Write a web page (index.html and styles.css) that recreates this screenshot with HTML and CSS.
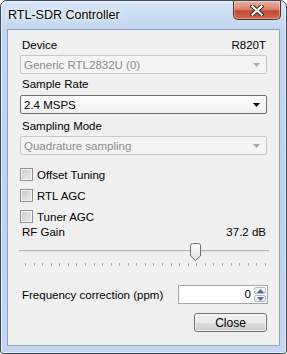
FILE: index.html
```html
<!DOCTYPE html>
<html>
  <head>
    <title>RTL-SDR Controller</title>
    <link rel="stylesheet" href="styles.css">
  </head>
  <body>
    <div id="window">
      <div id="titlebar">
        <div id="titlebar-title">RTL-SDR Controller</div>
        <div id="close-x">
          <svg width="14" height="11" viewBox="0 0 14 11">
            <path d="M2.5 1.5 L11.5 9.5 M11.5 1.5 L2.5 9.5" stroke="#3a2a28" stroke-width="4.2" stroke-linecap="square"/>
            <path d="M2.5 1.5 L11.5 9.5 M11.5 1.5 L2.5 9.5" stroke="#ffffff" stroke-width="2.2" stroke-linecap="square"/>
          </svg>
        </div>
      </div>
      <div id="client">
        <div class="label-row label-device">
          <span>Device</span>
          <span>R820T</span>
        </div>
        <div class="combo disabled combo-device">
          <span>Generic RTL2832U (0)</span>
          <svg class="arrow" width="7" height="4" viewBox="0 0 7 4"><path d="M0 0 H7 L3.5 4 Z"/></svg>
        </div>
        <div class="label-row label-rate">
          <span>Sample Rate</span>
        </div>
        <div class="combo combo-rate">
          <span>2.4 MSPS</span>
          <svg class="arrow" width="7" height="4" viewBox="0 0 7 4"><path d="M0 0 H7 L3.5 4 Z"/></svg>
        </div>
        <div class="label-row label-mode">
          <span>Sampling Mode</span>
        </div>
        <div class="combo disabled combo-mode">
          <span>Quadrature sampling</span>
          <svg class="arrow" width="7" height="4" viewBox="0 0 7 4"><path d="M0 0 H7 L3.5 4 Z"/></svg>
        </div>
        <div class="checks">
          <div class="check-row"><span class="checkbox"></span><span>Offset Tuning</span></div>
          <div class="check-row"><span class="checkbox"></span><span>RTL AGC</span></div>
          <div class="check-row"><span class="checkbox"></span><span>Tuner AGC</span></div>
        </div>
        <div class="label-row label-gain">
          <span>RF Gain</span>
          <span>37.2 dB</span>
        </div>
        <div class="slider">
          <div class="slider-track"></div>
          <div class="slider-ticks">
            <i></i><i></i><i></i><i></i><i></i><i></i><i></i><i></i><i></i><i></i>
            <i></i><i></i><i></i><i></i><i></i><i></i><i></i><i></i><i></i><i></i>
            <i></i><i></i><i></i><i></i><i></i><i></i><i></i><i></i><i></i>
          </div>
          <svg class="slider-thumb" style="left: 171px" width="11" height="18" viewBox="0 0 11 18">
            <defs>
              <linearGradient id="thumb-fill" x1="0" y1="0" x2="0" y2="1">
                <stop offset="0" stop-color="#ffffff"/>
                <stop offset="1" stop-color="#dcdcdc"/>
              </linearGradient>
            </defs>
            <path d="M0.5 2.5 Q0.5 0.5 2.5 0.5 H8.5 Q10.5 0.5 10.5 2.5 V13 L5.5 17.5 L0.5 13 Z" fill="url(#thumb-fill)" stroke="#707070"/>
          </svg>
        </div>
        <div class="freq-row">
          <span>Frequency correction (ppm)</span>
          <div class="spin-box">
            <span class="spin-value">0</span>
            <div class="spin-buttons">
              <div class="spin-btn">
                <svg width="7" height="4" viewBox="0 0 7 4"><path d="M0 4 H7 L3.5 0 Z"/></svg>
              </div>
              <div class="spin-btn">
                <svg width="7" height="4" viewBox="0 0 7 4"><path d="M0 0 H7 L3.5 4 Z"/></svg>
              </div>
            </div>
          </div>
        </div>
        <div class="button-row">
          <button id="close-button">Close</button>
        </div>
      </div>
    </div>
  </body>
</html>
```

FILE: styles.css
```css
* {
  margin: 0;
  padding: 0;
  box-sizing: border-box;
}

body {
  font-family: "Liberation Sans", Arial, sans-serif;
  font-size: 11.5px;
  color: #000;
  background-color: #fff;
}

#window {
  width: 287px;
  height: 354px;
  border: 1px solid #3d4a5a;
  border-radius: 7px 7px 3px 3px;
  background: linear-gradient(#d6e5f6, #c2d7ef 28px, #bdd3ec 60%, #c3d8ef);
  box-shadow: inset 0 0 0 1px rgba(255, 255, 255, 0.55);
  padding: 0 6px 7px 6px;
  display: flex;
  flex-direction: column;
}

#titlebar {
  height: 28px;
  display: flex;
  justify-content: space-between;
  align-items: flex-start;
}

#titlebar-title {
  font-size: 12.5px;
  margin: 7px 0 0 1px;
  line-height: 15px;
  text-shadow: 0 0 6px #ffffff, 0 0 3px #ffffff;
}

#close-x {
  width: 48px;
  height: 19px;
  margin-right: -1px;
  border: 1px solid #54302a;
  border-top: none;
  border-radius: 0 0 5px 5px;
  background: linear-gradient(#eab1a2, #d88673 45%, #c14a34 55%, #d2664c);
  box-shadow: inset 0 0 0 1px rgba(255, 255, 255, 0.35);
  display: flex;
  align-items: center;
  justify-content: center;
}

#client {
  flex: 1;
  background-color: #f0f0f0;
  border: 1px solid #8da2bd;
  padding: 0 12px;
  display: flex;
  flex-direction: column;
}

.label-row {
  display: flex;
  justify-content: space-between;
  line-height: 15px;
  padding: 0 1px 0 2px;
}

.label-device {
  margin-top: 8px;
}

.label-rate {
  margin-top: 3px;
}

.label-mode {
  margin-top: 5px;
}

.label-gain {
  margin-top: 2px;
}

.combo {
  height: 19px;
  margin-top: 2px;
  border: 1px solid #6f6f6f;
  border-radius: 2px;
  background: linear-gradient(#fdfdfd, #f1f1f1);
  display: flex;
  align-items: center;
  justify-content: space-between;
  padding: 0 6px 0 3px;
}

.combo-rate {
  margin-top: 3px;
}

.combo .arrow {
  fill: #000;
}

.combo.disabled {
  border-color: #c6c6c6;
  background: #f4f4f4;
  color: #8d8d8d;
}

.combo.disabled .arrow {
  fill: #a8a8a8;
}

.checks {
  margin-top: 13px;
  display: flex;
  flex-direction: column;
  gap: 8px;
}

.check-row {
  display: flex;
  align-items: center;
  height: 13px;
  gap: 4px;
}

.checkbox {
  width: 13px;
  height: 13px;
  border: 1px solid #8e8f8f;
  background: linear-gradient(135deg, #c4c8ce, #eeeeee);
  box-shadow: inset 0 0 0 1px #f4f4f4;
}

.slider {
  position: relative;
  height: 28px;
  margin: 0 -2px 0 -1px;
}

.slider-track {
  margin-top: 10px;
  height: 2px;
  border-top: 1px solid #b4b4b4;
  border-bottom: 1px solid #e6e6e6;
}

.slider-ticks {
  margin-top: 11px;
  padding: 0 3px 0 6px;
  display: flex;
  justify-content: space-between;
}

.slider-ticks i {
  width: 1px;
  height: 3px;
  background-color: #b0b0b0;
}

.slider-thumb {
  position: absolute;
  top: 3px;
}

.freq-row {
  margin-top: 17px;
  display: flex;
  justify-content: space-between;
  align-items: center;
  padding-left: 2px;
}

.spin-box {
  width: 90px;
  height: 19px;
  margin-right: -1px;
  border: 1px solid #a6a6a6;
  background-color: #fff;
  display: flex;
  align-items: stretch;
  justify-content: flex-end;
  padding: 1px;
}

.spin-value {
  line-height: 15px;
  padding-right: 3px;
}

.spin-buttons {
  width: 12px;
  display: flex;
  flex-direction: column;
  gap: 1px;
}

.spin-btn {
  flex: 1;
  border: 1px solid #b4bac4;
  border-radius: 2px;
  background: linear-gradient(#f4f6f9, #dfe4ea);
  display: flex;
  align-items: center;
  justify-content: center;
}

.spin-btn svg {
  fill: #4d6a94;
}

.button-row {
  margin-top: 9px;
  display: flex;
  justify-content: flex-end;
}

#close-button {
  width: 73px;
  height: 19px;
  font-family: inherit;
  font-size: 12px;
  border: 1px solid #707070;
  border-radius: 3px;
  background: linear-gradient(#f2f2f2, #ebebeb 50%, #dddddd 50%, #cfcfcf);
  box-shadow: inset 0 0 0 1px rgba(255, 255, 255, 0.7);
  color: #000;
}
```
